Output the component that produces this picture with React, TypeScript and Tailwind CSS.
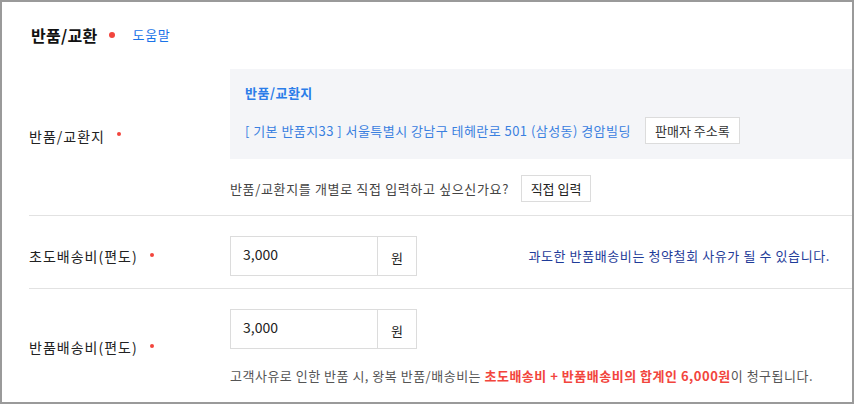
import React from 'react';

const Dot = () => <span className="ml-[12px] mb-[3px] inline-block w-[4px] h-[4px] rounded-full bg-[#f2453d]" />;

const Label = ({ text }: { text: string }) => (
  <div className="w-[201px] shrink-0 flex items-center text-[14px] leading-[20px] tracking-[1px] text-[#222]">
    <span>{text}</span>
    <Dot />
  </div>
);

const PriceInput = ({ value }: { value: string }) => (
  <div className="flex w-[187px] h-[40px] border border-[#dcdcdc] bg-white">
    <div className="flex-1 flex items-center pl-[12px] pb-[3px] text-[14px] text-[#222]">{value}</div>
    <div className="w-[39px] border-l border-[#dcdcdc] flex items-center justify-center pt-[4px] text-[13px] text-[#222]">원</div>
  </div>
);

export default function App() {
  return (
    <div
      className="w-[854px] h-[404px] border-2 border-[#9a9a9a] bg-white overflow-hidden"
      style={{ fontFamily: '"Noto Sans CJK KR", "Noto Sans", sans-serif' }}
    >
      <div className="pl-[27px]">
        {/* Header */}
        <div className="pt-[22px] flex items-center h-[44px]">
          <h1 className="pl-[2px] text-[16px] leading-[20px] font-bold text-[#111] tracking-[0.3px]">반품/교환</h1>
          <span className="ml-[11px] w-[6px] h-[6px] rounded-full bg-[#f2453d]" />
          <a className="ml-[18px] text-[13px] leading-[20px] tracking-[0.6px] text-[#1a73e8]">도움말</a>
        </div>

        {/* Return address */}
        <div className="mt-[10px] flex items-center pt-[13px] pb-[13px] border-b border-[#e2e2e2]">
          <Label text="반품/교환지" />
          <div className="flex-1">
            <div className="h-[90px] bg-[#f4f5f8] px-[15px] pt-[15px]">
              <div className="text-[13px] leading-[18px] font-bold tracking-[0.5px] text-[#2b7de9]">반품/교환지</div>
              <div className="mt-[15px] flex items-center h-[27px]">
                <span className="text-[13px] text-[#3a80e0] tracking-[0.45px]">[ 기본 반품지33 ] 서울특별시 강남구 테헤란로 501 (삼성동) 경암빌딩</span>
                <button className="ml-[14px] h-[27px] w-[95px] bg-white border border-[#dcdcdc] text-[13px] text-[#333]">판매자 주소록</button>
              </div>
            </div>
            <div className="mt-[16px] flex items-center h-[27px]">
              <span className="text-[13px] text-[#444] tracking-[0.65px]">반품/교환지를 개별로 직접 입력하고 싶으신가요?</span>
              <button className="ml-[12px] h-[27px] w-[70px] bg-white border border-[#dcdcdc] text-[13px] text-[#222]">직접 입력</button>
            </div>
          </div>
        </div>

        {/* Initial shipping fee */}
        <div className="flex items-center pt-[20px] pb-[12px] border-b border-[#e2e2e2]">
          <Label text="초도배송비(편도)" />
          <div className="flex-1 flex items-center justify-between pr-[22px]">
            <PriceInput value="3,000" />
            <span className="text-[13px] tracking-[0.6px] text-[#1f3c99]">과도한 반품배송비는 청약철회 사유가 될 수 있습니다.</span>
          </div>
        </div>

        {/* Return shipping fee */}
        <div className="flex items-center pt-[20px] pb-[20px]">
          <Label text="반품배송비(편도)" />
          <div className="flex-1">
            <PriceInput value="3,000" />
            <p className="mt-[18px] text-[13px] leading-[18px] tracking-[0.5px] text-[#555]">
              고객사유로 인한 반품 시, 왕복 반품/배송비는{' '}
              <span className="font-bold text-[#f2453d]">초도배송비 + 반품배송비의 합계인 6,000원</span>이 청구됩니다.
            </p>
          </div>
        </div>
      </div>
    </div>
  );
}
